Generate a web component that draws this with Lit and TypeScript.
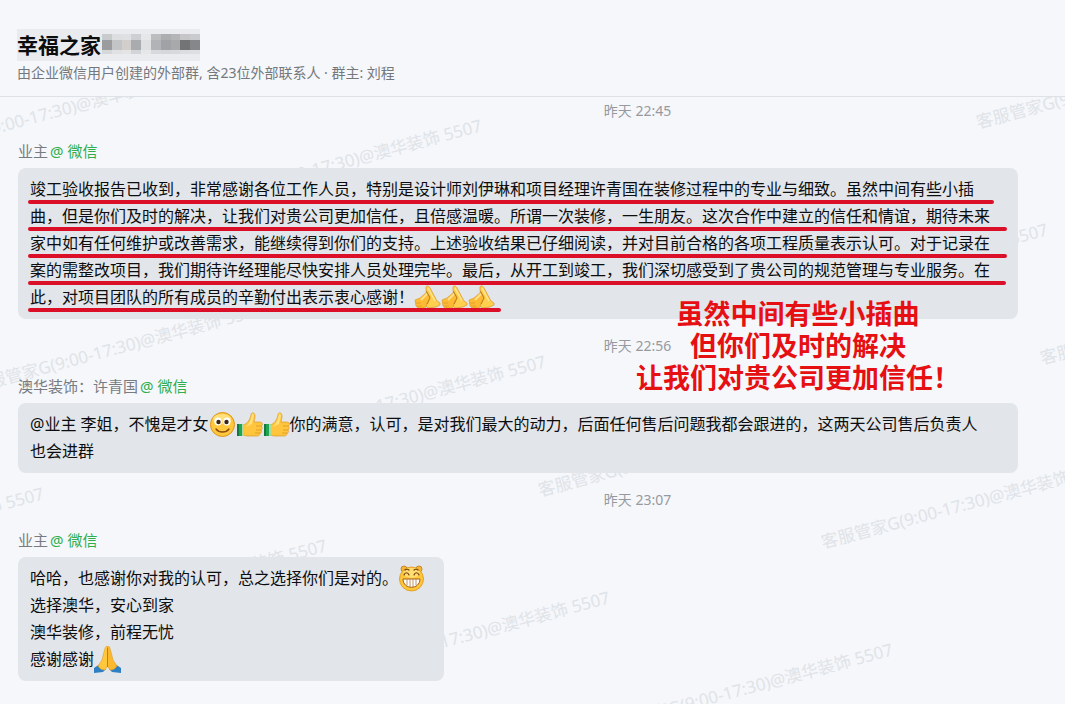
import { LitElement, html, svg, css, TemplateResult } from "lit";
import { customElement, property } from "lit/decorators.js";
import { styleMap } from "lit/directives/style-map.js";

type EmojiName = "salute" | "smile" | "thumb" | "grin" | "pray";

interface Line {
  text: string;
  emoji?: EmojiName[];
  after?: string;
  mark?: number;
}

interface Message {
  time: string;
  name: string;
  lines: Line[];
}

/* Message text is typed with ASCII marks and shown with full-width ones. */
const WIDE_MARKS: Record<string, string> = { ",": "\uff0c", ":": "\uff1a", "!": "\uff01" };
const widen = (s = "") => s.replace(/[,:!]/g, (c) => WIDE_MARKS[c]);

const MESSAGES: Message[] = [
  {
    time: "昨天 22:45",
    name: "业主",
    lines: [
      { text: "竣工验收报告已收到,非常感谢各位工作人员,特别是设计师刘伊琳和项目经理许青国在装修过程中的专业与细致。虽然中间有些小插", mark: 966 },
      { text: "曲,但是你们及时的解决,让我们对贵公司更加信任,且倍感温暖。所谓一次装修,一生朋友。这次合作中建立的信任和情谊,期待未来", mark: 979 },
      { text: "家中如有任何维护或改善需求,能继续得到你们的支持。上述验收结果已仔细阅读,并对目前合格的各项工程质量表示认可。对于记录在", mark: 979 },
      { text: "案的需整改项目,我们期待许经理能尽快安排人员处理完毕。最后,从开工到竣工,我们深切感受到了贵公司的规范管理与专业服务。在", mark: 978 },
      { text: "此,对项目团队的所有成员的辛勤付出表示衷心感谢!", emoji: ["salute", "salute", "salute"], mark: 473 },
    ],
  },
  {
    time: "昨天 22:56",
    name: "澳华装饰:许青国",
    lines: [
      { text: "@业主 李姐,不愧是才女", emoji: ["smile", "thumb", "thumb"], after: "你的满意,认可,是对我们最大的动力,后面任何售后问题我都会跟进的,这两天公司售后负责人" },
      { text: "也会进群" },
    ],
  },
  {
    time: "昨天 23:07",
    name: "业主",
    lines: [
      { text: "哈哈,也感谢你对我的认可,总之选择你们是对的。", emoji: ["grin"] },
      { text: "选择澳华,安心到家" },
      { text: "澳华装修,前程无忧" },
      { text: "感谢感谢", emoji: ["pray"] },
    ],
  },
];

const EMOJI: Record<EmojiName, TemplateResult> = {
  salute: svg`
    <path d="M1 16 6 14 14 7 17 15 14 22 10 24 4 24 2 22Z" fill="#fdbb34" stroke="#d9962a" stroke-width=".6"/>
    <path d="M7 16 14 9" stroke="#ffe08a" stroke-width="2"/>
    <path d="M2 19h5M3 22h5" stroke="#d9962a" stroke-width=".7"/>
    <path d="M12 3c1-2 3-1 4 1l7 13 3 2v2l-4 2-8 1-2-2 3-6 1-3-4-7Z" fill="#ffcf4d" stroke="#d9962a" stroke-width=".7"/>
    <path d="M14 4 21 17" stroke="#ffe690" stroke-width="1.500"/>
    <path d="M12 7 16 14 13 20" fill="none" stroke="#b8761a" stroke-width=".9"/>`,
  smile: svg`
    <circle cx="13.500" cy="13.500" r="12" fill="#ffc83c" stroke="#dc951e"/>
    <ellipse cx="13" cy="8" rx="9" ry="5" fill="#ffe07a"/>
    <ellipse cx="9" cy="10.500" rx="3.600" ry="4" fill="#fff"/>
    <ellipse cx="18" cy="10.500" rx="3.600" ry="4" fill="#fff"/>
    <circle cx="9.500" cy="11" r="2.200" fill="#3b2412"/>
    <circle cx="17.500" cy="11" r="2.200" fill="#3b2412"/>
    <path d="M7 18c3 4 10 4 13 0" fill="none" stroke="#8c4a12" stroke-width="1.300" stroke-linecap="round"/>`,
  thumb: svg`
    <path d="M7 14c4-1 7-5 8-10 0-3 4-3 4 1 0 3-1 5-1 6h6c3 0 3 4 1 4 2 1 1 4 0 4 1 1 0 4-1 3 0 2-1 3-3 3H11l-4-1Z" fill="#ffc53d" stroke="#e09a26" stroke-width=".7"/>
    <path d="M16 3c1-1 2 0 2 2l-2 8-6 3c3-3 5-7 6-13Z" fill="#ffe07a"/>
    <path d="M20 15h5M20 19h5M19 22h5" stroke="#e09a26" stroke-width=".9"/>
    <path d="M1 13h6v12H1Z" fill="#23a455"/><path d="M1 13h2v12H1Z" fill="#137a3d"/>
    <path d="M6 13h2v12H6Z" fill="#a9dba0"/>`,
  grin: svg`
    <circle cx="6" cy="4" r="3" fill="#f7b733" stroke="#bd7a1c" stroke-width=".8"/>
    <circle cx="21" cy="4" r="3" fill="#f7b733" stroke="#bd7a1c" stroke-width=".8"/>
    <ellipse cx="13.500" cy="14" rx="12" ry="12" fill="#ffc638" stroke="#dc951e" stroke-width=".8"/>
    <ellipse cx="13.500" cy="8" rx="8" ry="5" fill="#ffdd70"/>
    <path d="M6 10c1-3 4-3 5 0M16 10c1-3 4-3 5 0M7 5c1-1 3-1 4 0M16 5c1-1 3-1 4 0" fill="none" stroke="#7a4212" stroke-width="1.200" stroke-linecap="round"/>
    <path d="M5 14h17c0 11-17 11-17 0Z" fill="#fff" stroke="#a35c16" stroke-width="1"/>
    <path d="M9 14v6M12 14v8M15 14v8M18 14v6" stroke="#b88850" stroke-width=".9"/>`,
  pray: svg`
    <path d="M0 22 6 18 12 23 9 26 0 27Z" fill="#2f7fc4"/>
    <path d="M27 22 21 18 15 23 18 26 27 27Z" fill="#2f7fc4"/>
    <path d="M13.500 0C11 0 11 3 10 6L8 14 4 20c2 3 4 4 7 4l2.500-4Z" fill="#ffc83c" stroke="#e09a26" stroke-width=".6"/>
    <path d="M13.500 0C16 0 16 3 17 6l2 8 4 6c-2 3-4 4-7 4l-2.500-4Z" fill="#fdb92e" stroke="#e09a26" stroke-width=".6"/>
    <path d="M13.500 2v19" stroke="#c97c14" stroke-width="1"/>`,
};

@customElement("chat-emoji")
class ChatEmoji extends LitElement {
  static styles = css`
    :host { display: inline-block; width: 27px; height: 27px; vertical-align: top; }
    .art { display: block; width: 100%; height: 100%; }
  `;
  @property() name: EmojiName = "smile";
  render() {
    return html`<svg class="art" viewBox="0 0 27 27" aria-hidden="true">${EMOJI[this.name]}</svg>`;
  }
}

@customElement("chat-message")
class ChatMessage extends LitElement {
  static styles = css`
    :host { display: block; }
    .time {
      display: block; padding-left: 210px; text-align: center;
      font-size: 14px; line-height: 22px; color: #969a9f;
    }
    .name { margin: 19px 0 7px 18px; font-size: 15px; line-height: 20px; color: #787c81; display: flex; gap: 2px; }
    .source { color: #2fae4e; }
    .bubble {
      box-sizing: border-box; width: fit-content; min-width: 40%;
      margin: 0 47px 0 18px; padding: 8px 12px; border-radius: 8px; background: #e2e5e9;
      font-size: 16px; line-height: 27px; color: #0c0d0e;
    }
    .bubble.wide { width: auto; }
    .line { display: block; position: relative; min-height: 27px; }
    .mark {
      position: absolute; left: -2px; bottom: -1px; height: 4px;
      border-radius: 2px; background: #dc0f28;
    }
  `;
  @property({ attribute: false }) message!: Message;
  render() {
    const { time, name, lines } = this.message;
    const wide = lines.some((l) => l.mark || l.after);
    return html`
      <time class="time">${time}</time>
      <div class="name"><span>${widen(name)}</span><span class="source">@ 微信</span></div>
      <div class="bubble ${wide ? "wide" : ""}">
        ${lines.map((l) => html`<span class="line">${widen(l.text)}${(l.emoji ?? []).map(
          (e) => html`<chat-emoji name=${e}></chat-emoji>`)}${widen(l.after)}${l.mark
          ? html`<span class="mark" style=${styleMap({ width: `${l.mark}px` })}></span>` : ""}</span>`)}
      </div>`;
  }
}

/* Watermark stamps repeat on a slanted lattice; each entry is the [column, row] of a stamp. */
const STAMPS = [
  [-1, 0], [0, 0], [2, 0], [3, 0],
  [-1, 1], [0, 1], [1, 1], [2, 1], [3, 1],
  [-2, 2], [-1, 2], [0, 2], [1, 2],
].map(([col, row]) => [483 + 283 * col + 64 * row, 34 + 52 * col + 236 * row])
  .concat([[1268, -46]]);

/* Grey levels of the pixelated part of the group title, one row per band. */
const MOSAIC = [
  { y: 0, h: 6, cells: ["#c9cacc", "#dddee0", "#dfe0e2", "#cdcfd2", "#e6e7e9", "#bcbdbf", "#adaeb0", "#b4b5b7", "#c6c6c9", "#c9cacd"] },
  { y: 6, h: 10, cells: ["#9b9c9e", "#c3c4c6", "#d1cecb", "#a9abaf", "#dfe0e2", "#b2b3b6", "#a1a2a5", "#a8a9ab", "#737476", "#86878b"] },
  { y: 16, h: 4, cells: ["#d6d7d9", "#e0e1e3", "#e3e4e6", "#d2d4d7", "#e6e7e9", "#d8d9dc", "#d6d7da", "#d8d9dc", "#dcdde0", "#dedfe2"] },
];

@customElement("app-root")
class AppRoot extends LitElement {
  static styles = css`
    :host {
      display: flex; flex-direction: column; min-height: 100vh; background: #f5f7fb;
      font-family: "Noto Sans", "Noto Sans CJK SC", sans-serif;
    }
    .header { padding: 29px 17px 13px; border-bottom: 1px solid #dee1e5; }
    .title {
      display: flex; gap: 1px; width: fit-content; margin: 0; background: #e9ebee;
      font-size: 21px; line-height: 32px; font-weight: 700; color: #0c0d0e;
    }
    .mosaic { width: 98px; height: 20px; margin-top: 5px; }
    .subtitle { margin: 2px 0 0; font-size: 14px; line-height: 20px; color: #74787d; }
    .chat { position: relative; flex: 1; padding: 3px 0 20px; overflow: hidden; }
    .stamps { position: absolute; inset: 0; width: 100%; height: 100%; font-size: 17px; fill: #e0e3e7; }
    .list { position: relative; display: flex; flex-direction: column; gap: 16px; }
    .caption {
      position: absolute; left: 636px; top: 200px; margin: 0; text-align: center; white-space: nowrap;
      font-family: "Noto Sans CJK SC", sans-serif; font-size: 27px; line-height: 32px; font-weight: 700; color: #e60f12;
    }
  `;
  render() {
    return html`
      <header class="header">
        <h1 class="title">幸福之家
          <svg class="mosaic" viewBox="0 0 10 20" preserveAspectRatio="none" shape-rendering="crispEdges" aria-hidden="true">
            ${MOSAIC.map((b) => b.cells.map((c, x) => svg`<rect x=${x} y=${b.y} width="1" height=${b.h} fill=${c}/>`))}
          </svg>
        </h1>
        <p class="subtitle">由企业微信用户创建的外部群, 含23位外部联系人 · 群主: 刘程</p>
      </header>
      <main class="chat">
        <svg class="stamps" aria-hidden="true">
          ${STAMPS.map(([x, y]) => svg`<text text-anchor="end" transform="translate(${x} ${y}) rotate(-15)">客服管家G(9:00-17:30)@澳华装饰 5507</text>`)}
        </svg>
        <div class="list">${MESSAGES.map((m) => html`<chat-message .message=${m}></chat-message>`)}</div>
        <p class="caption">虽然中间有些小插曲<br />但你们及时的解决<br />${widen("让我们对贵公司更加信任!")}</p>
      </main>`;
  }
}
